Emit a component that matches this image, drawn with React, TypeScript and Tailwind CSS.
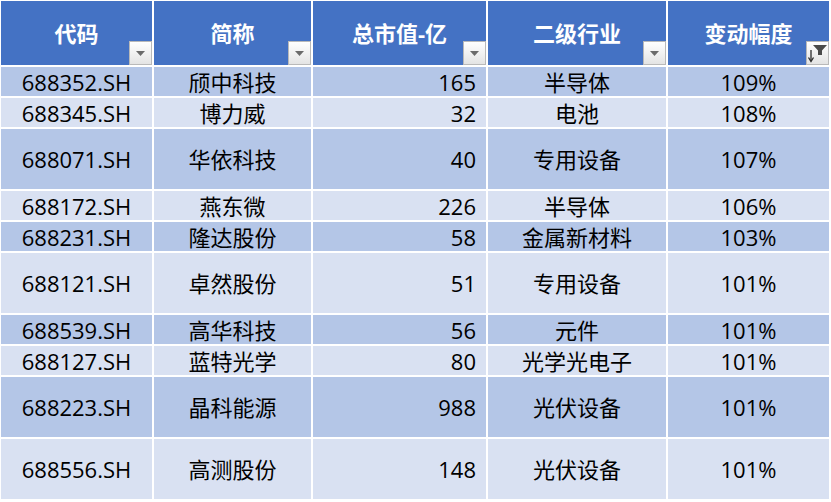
const headers = ['代码', '简称', '总市值-亿', '二级行业', '变动幅度'];

type Row = { code: string; name: string; cap: string; industry: string; change: string; tall?: boolean };

const rows: Row[] = [
  { code: '688352.SH', name: '颀中科技', cap: '165', industry: '半导体', change: '109%' },
  { code: '688345.SH', name: '博力威', cap: '32', industry: '电池', change: '108%' },
  { code: '688071.SH', name: '华依科技', cap: '40', industry: '专用设备', change: '107%', tall: true },
  { code: '688172.SH', name: '燕东微', cap: '226', industry: '半导体', change: '106%' },
  { code: '688231.SH', name: '隆达股份', cap: '58', industry: '金属新材料', change: '103%' },
  { code: '688121.SH', name: '卓然股份', cap: '51', industry: '专用设备', change: '101%', tall: true },
  { code: '688539.SH', name: '高华科技', cap: '56', industry: '元件', change: '101%' },
  { code: '688127.SH', name: '蓝特光学', cap: '80', industry: '光学光电子', change: '101%' },
  { code: '688223.SH', name: '晶科能源', cap: '988', industry: '光伏设备', change: '101%', tall: true },
  { code: '688556.SH', name: '高测股份', cap: '148', industry: '光伏设备', change: '101%', tall: true },
];

function FilterButton({ sorted }: { sorted?: boolean }) {
  return (
    <div className="absolute right-0 bottom-0 w-[23px] h-[24px] border border-[#b9b9b9] bg-gradient-to-b from-[#ffffff] to-[#e4e4e4] flex items-center justify-center">
      {sorted ? (
        <svg width="21" height="22" viewBox="0 0 21 22">
          {/* down arrow */}
          <line x1="4" y1="8" x2="4" y2="19" stroke="#2b2b2b" strokeWidth="1.3" />
          <path d="M1.5 15.5 L4 19.5 L6.5 15.5" fill="none" stroke="#2b2b2b" strokeWidth="1.3" />
          {/* funnel */}
          <path d="M6 3 H20 L15 8.5 V13 H11 V8.5 Z" fill="#4a4a4a" />
        </svg>
      ) : (
        <svg width="9" height="5" viewBox="0 0 9 5">
          <path d="M0 0 H9 L4.5 5 Z" fill="#6b6b6b" />
        </svg>
      )}
    </div>
  );
}

export default function App() {
  return (
    <div
      className="w-[831px] h-[502px] bg-white pt-[1px] pl-[1px] text-[22px] text-black overflow-hidden"
      style={{ fontFamily: '"Open Sans", "Noto Sans CJK SC", sans-serif' }}
    >
      <div className="grid grid-cols-[151px_157px_173px_178px_161px] gap-[2px]">
        {/* Header Row */}
        {headers.map((h, i) => (
          <div key={h} className="relative h-[64px] bg-[#4472c4] flex items-center justify-center">
            <span className="font-bold text-white leading-none -mt-[1px]">{h}</span>
            <FilterButton sorted={i === 4} />
          </div>
        ))}

        {/* Data Rows */}
        {rows.map((r, idx) => {
          const bg = idx % 2 === 0 ? 'bg-[#b4c6e7]' : 'bg-[#d9e1f2]';
          const h = r.tall ? 'h-[60px]' : 'h-[29px]';
          return [
            <div key={r.code + 'a'} className={`${bg} ${h} flex items-center justify-center leading-none`}>{r.code}</div>,
            <div key={r.code + 'b'} className={`${bg} ${h} flex items-center justify-center leading-none`}>{r.name}</div>,
            <div key={r.code + 'c'} className={`${bg} ${h} flex items-center justify-end pr-[10px] leading-none`}>{r.cap}</div>,
            <div key={r.code + 'd'} className={`${bg} ${h} flex items-center justify-center leading-none`}>{r.industry}</div>,
            <div key={r.code + 'e'} className={`${bg} ${h} flex items-center justify-center leading-none`}>{r.change}</div>,
          ];
        })}
      </div>
    </div>
  );
}
